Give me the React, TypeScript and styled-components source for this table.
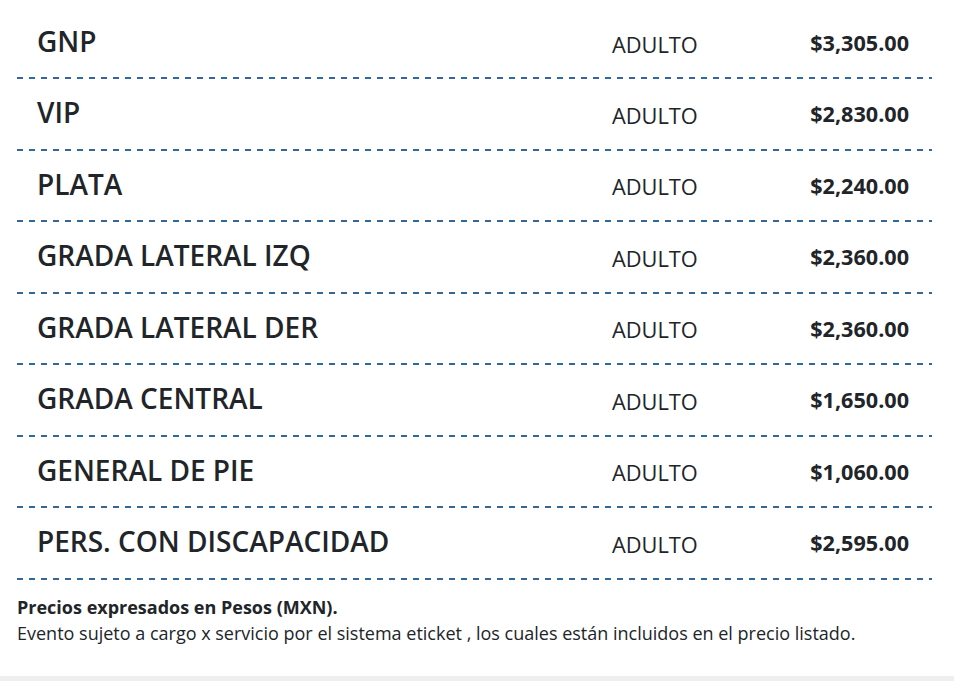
import React from "react";
import styled, { createGlobalStyle } from "styled-components";

const Global = createGlobalStyle`
  html, body { margin: 0; padding: 0; background: #fff; }
  body { font-family: "Open Sans", "Liberation Sans", sans-serif; color: #212529; }
`;

const Page = styled.div`
  width: 954px;
  height: 681px;
  display: flex;
  flex-direction: column;
  overflow: hidden;
`;

const Table = styled.div`
  margin: 8px 22px 0 17px;
  display: flex;
  flex-direction: column;
`;

const Row = styled.div`
  display: grid;
  grid-template-columns: 575px 1fr auto;
  align-items: center;
  height: 71.5px;
  box-sizing: border-box;
  padding: 0 23px 2px 20px;
  background: linear-gradient(to right, #336699 50%, transparent 50%) left bottom / 12px 2px repeat-x;
  &:first-child { height: 71px; }
`;

const Name = styled.div`
  font-size: 28px;
  font-weight: 600;
  color: #212529;
  margin-top: -3px;
`;

const Type = styled.div`
  font-size: 21.8px;
  font-weight: 400;
  color: #212529;
  margin-top: 3px;
`;

const Price = styled.div`
  font-size: 21.6px;
  font-weight: 700;
  color: #212529;
  text-align: right;
  margin-top: 0;
`;

const Footer = styled.div`
  margin: 14px 17px 0;
  font-size: 18px;
  line-height: 26px;
  color: #212529;
`;

const Strong = styled.div`
  font-weight: 700;
`;

const Spacer = styled.div`
  flex: 1;
`;

const Band = styled.div`
  height: 5px;
  background: #efefef;
`;

const rows = [
  ["GNP", "$3,305.00"],
  ["VIP", "$2,830.00"],
  ["PLATA", "$2,240.00"],
  ["GRADA LATERAL IZQ", "$2,360.00"],
  ["GRADA LATERAL DER", "$2,360.00"],
  ["GRADA CENTRAL", "$1,650.00"],
  ["GENERAL DE PIE", "$1,060.00"],
  ["PERS. CON DISCAPACIDAD", "$2,595.00"],
];

export default function App() {
  return (
    <Page>
      <Global />
      <Table>
        {rows.map(([n, p]) => (
          <Row key={n}>
            <Name>{n}</Name>
            <Type>ADULTO</Type>
            <Price>{p}</Price>
          </Row>
        ))}
      </Table>
      <Footer>
        <Strong>Precios expresados en Pesos (MXN).</Strong>
        <div>Evento sujeto a cargo x servicio por el sistema eticket , los cuales están incluidos en el precio listado.</div>
      </Footer>
      <Spacer />
      <Band />
    </Page>
  );
}
